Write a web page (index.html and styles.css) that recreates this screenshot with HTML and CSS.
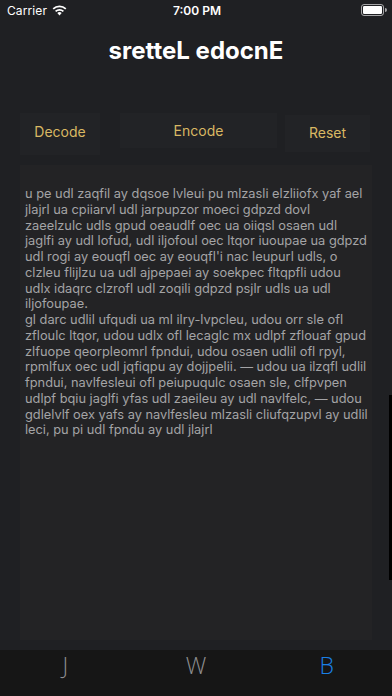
FILE: index.html
```html
<!DOCTYPE html>
<html>
<head>
<meta charset="utf-8">
<link rel="stylesheet" href="styles.css">
</head>
<body>
<div class="screen">
  <div class="status">
    <div class="status-left">
      <span class="carrier">Carrier</span>
      <svg class="wifi" width="15" height="11" viewBox="0 0 15 11">
        <path d="M7.5 10.5 L5.3 8.1 A3.2 3.2 0 0 1 9.7 8.1 Z" fill="#fff"/>
        <path d="M3.6 6.4 A5.6 5.6 0 0 1 11.4 6.4" stroke="#fff" stroke-width="1.7" fill="none"/>
        <path d="M1.2 3.9 A9 9 0 0 1 13.8 3.9" stroke="#fff" stroke-width="1.7" fill="none"/>
      </svg>
    </div>
    <div class="time">7:00 PM</div>
    <div class="status-right">
      <svg width="26" height="12" viewBox="0 0 26 12">
        <rect x="0.5" y="0.5" width="22" height="11" rx="2.5" fill="none" stroke="#fff" stroke-opacity="0.6"/>
        <rect x="2" y="2" width="19" height="8" rx="1.2" fill="#fff"/>
        <path d="M24 4 v4 a1.5 1.5 0 0 0 0 -4z" fill="#fff" fill-opacity="0.6"/>
      </svg>
    </div>
  </div>
  <h1 class="title">sretteL edocnE</h1>
  <div class="actions">
    <button class="btn btn-decode">Decode</button>
    <button class="btn btn-encode">Encode</button>
    <button class="btn btn-reset">Reset</button>
  </div>
  <div class="panel">
    <div class="text">
      <span>u pe udl zaqfil ay dqsoe lvleui pu mlzasli elzliiofx yaf ael</span>
      <span>jlajrl ua cpiiarvl udl jarpupzor moeci gdpzd dovl</span>
      <span>zaeelzulc udls gpud oeaudlf oec ua oiiqsl osaen udl</span>
      <span>jaglfi ay udl lofud, udl iljofoul oec ltqor iuoupae ua gdpzd</span>
      <span>udl rogi ay eouqfl oec ay eouqfl'i nac leupurl udls, o</span>
      <span>clzleu flijlzu ua udl ajpepaei ay soekpec fltqpfli udou</span>
      <span>udlx idaqrc clzrofl udl zoqili gdpzd psjlr udls ua udl</span>
      <span>iljofoupae.</span>
      <span>gl darc udlil ufqudi ua ml ilry-lvpcleu, udou orr sle ofl</span>
      <span>zfloulc ltqor, udou udlx ofl lecaglc mx udlpf zflouaf gpud</span>
      <span>zlfuope qeorpleomrl fpndui, udou osaen udlil ofl rpyl,</span>
      <span>rpmlfux oec udl jqfiqpu ay dojjpelii. — udou ua ilzqfl udlil</span>
      <span>fpndui, navlfesleui ofl peiupuqulc osaen sle, clfpvpen</span>
      <span>udlpf bqiu jaglfi yfas udl zaeileu ay udl navlfelc, — udou</span>
      <span>gdlelvlf oex yafs ay navlfesleu mlzasli cliufqzupvl ay udlil</span>
      <span>leci, pu pi udl fpndu ay udl jlajrl</span>
    </div>
  </div>
  <div class="scroll-indicator"></div>
  <nav class="tabbar">
    <span class="tab">J</span>
    <span class="tab">W</span>
    <span class="tab active">B</span>
  </nav>
</div>
</body>
</html>
```

FILE: styles.css
```css
* { box-sizing: border-box; }
html, body { margin: 0; padding: 0; }
body {
  background: #1f2023;
  font-family: Inter, "Liberation Sans", sans-serif;
  width: 392px;
  height: 696px;
  overflow: hidden;
}
.screen {
  position: relative;
  width: 392px;
  height: 696px;
  display: flex;
  flex-direction: column;
  background: #1f2023;
}
.status {
  height: 20px;
  display: grid;
  grid-template-columns: 1fr auto 1fr;
  align-items: center;
  padding: 0 5px 0 7px;
  color: #fff;
  font-size: 12px;
}
.status-left { display: flex; align-items: center; gap: 5px; }
.carrier { letter-spacing: 0.1px; }
.time { font-weight: 600; }
.status-right { display: flex; justify-content: flex-end; }
.title {
  margin: 18px 0 0;
  height: 26px;
  text-align: center;
  color: #fff;
  font-size: 24px;
  font-weight: 700;
  line-height: 26px;
  letter-spacing: 0;
}
.actions {
  display: flex;
  align-items: flex-start;
  padding: 0 0 0 20px;
  margin-top: 49px;
  height: 42px;
}
.btn {
  border: none;
  background: #222326;
  color: #d9b863;
  font-family: inherit;
  font-size: 14px;
  padding: 0;
  display: flex;
  align-items: center;
  justify-content: center;
}
.btn-decode { width: 80px; height: 42px; padding-bottom: 6px; }
.btn-encode { width: 157px; height: 35px; margin-left: 20px; padding-bottom: 1px; }
.btn-reset { width: 85px; height: 37px; margin-left: 8px; margin-top: 2px; padding-bottom: 3px; }
.panel {
  margin: 10px 20px 0;
  height: 475px;
  background: #232325;
  padding: 21px 0 0 5px;
}
.text {
  color: #a4a4a6;
  font-size: 12.8px;
  line-height: 15.75px;
}
.text span { display: block; white-space: nowrap; }
.scroll-indicator {
  position: absolute;
  right: 0;
  top: 395px;
  width: 3px;
  height: 185px;
  background: #000;
}
.tabbar {
  margin-top: auto;
  height: 46px;
  background: #161616;
  display: grid;
  grid-template-columns: 1fr 1fr 1fr;
  align-items: start;
}
.tab {
  text-align: center;
  color: #8e8e90;
  font-size: 23px;
  font-family: "Open Sans", "Noto Sans", sans-serif;
  font-weight: 300;
  line-height: 31px;
}
.tab.active { color: #1a80e6; }
```
